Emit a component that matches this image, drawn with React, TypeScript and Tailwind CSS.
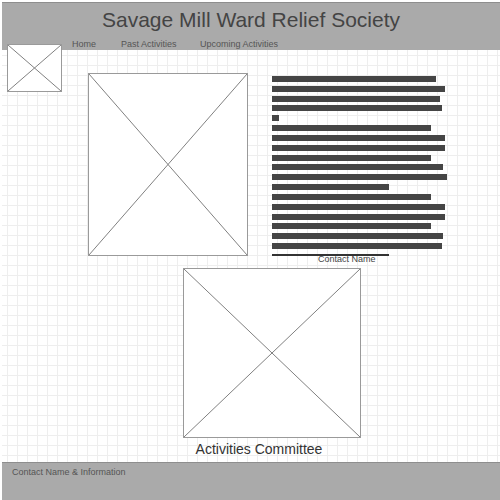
import React from "react";

const bars = [164, 173, 168, 170, 7, 159, 173, 173, 159, 171, 175, 117, 159, 173, 173, 159, 171, 170];

function Placeholder({ className }: { className: string }) {
  return (
    <div className={`border border-[#9a9a9a] bg-white ${className}`}>
      <svg className="block h-full w-full" viewBox="0 0 100 100" preserveAspectRatio="none">
        <line x1="0" y1="0" x2="100" y2="100" stroke="#808080" strokeWidth="1" vectorEffect="non-scaling-stroke" />
        <line x1="100" y1="0" x2="0" y2="100" stroke="#808080" strokeWidth="1" vectorEffect="non-scaling-stroke" />
      </svg>
    </div>
  );
}

export default function App() {
  return (
    <div className="relative h-[500px] w-[500px] overflow-hidden bg-white pl-[2px] pt-[2px] font-['Liberation_Sans',Arial,sans-serif]">
      <div className="flex h-full flex-col bg-[linear-gradient(to_right,#eeeeee_1px,transparent_1px),linear-gradient(to_bottom,#eeeeee_1px,transparent_1px)] bg-size-[10px_10px] bg-position-[5px_3px]">
        {/* Header */}
        <header className="h-[48px] shrink-0 border-t border-[#8e8e8e] bg-[#aaaaaa] pt-[5px]">
          <h1 className="text-center text-[21px] leading-[24px] text-[#444]">Savage Mill Ward Relief Society</h1>
          <nav className="mt-[6px] flex pl-[70px] text-[9px] leading-[12px] text-[#555]">
            <span className="w-[49px]">Home</span>
            <span className="w-[79px]">Past Activities</span>
            <span>Upcoming Activities</span>
          </nav>
        </header>

        {/* Top row: picture + text */}
        <div className="flex pl-[86px] pt-[23px]">
          <Placeholder className="h-[183px] w-[160px]" />
          <div className="ml-[24px] pt-[3px]">
            <div className="flex flex-col gap-[3.83px]">
              {bars.map((w, i) => (
                <div key={i} className="h-[6px] bg-[#454545]" style={{ width: w }} />
              ))}
            </div>
            <div className="mt-[4.6px] h-[2px] w-[117px] bg-[#333]" />
            <p className="-mt-[2px] pl-[46px] text-[9px] leading-[10px] text-[#444]">Contact Name</p>
          </div>
        </div>

        {/* Committee */}
        <Placeholder className="ml-[181px] mt-[4px] h-[170px] w-[178px]" />
        <p className="ml-[181px] mt-[3px] w-[152px] whitespace-nowrap text-center text-[14px] leading-[16px] text-[#333]">
          Activities Committee
        </p>

        {/* Footer */}
        <footer className="mt-auto h-[38px] shrink-0 border-t border-[#8e8e8e] bg-[#aaaaaa] pl-[10px] pt-[3px] text-[9px] leading-[12px] text-[#555]">
          Contact Name &amp; Information
        </footer>
      </div>

      {/* Logo placeholder overlapping the header */}
      <Placeholder className="absolute left-[7px] top-[44px] h-[48px] w-[55px]" />
    </div>
  );
}
